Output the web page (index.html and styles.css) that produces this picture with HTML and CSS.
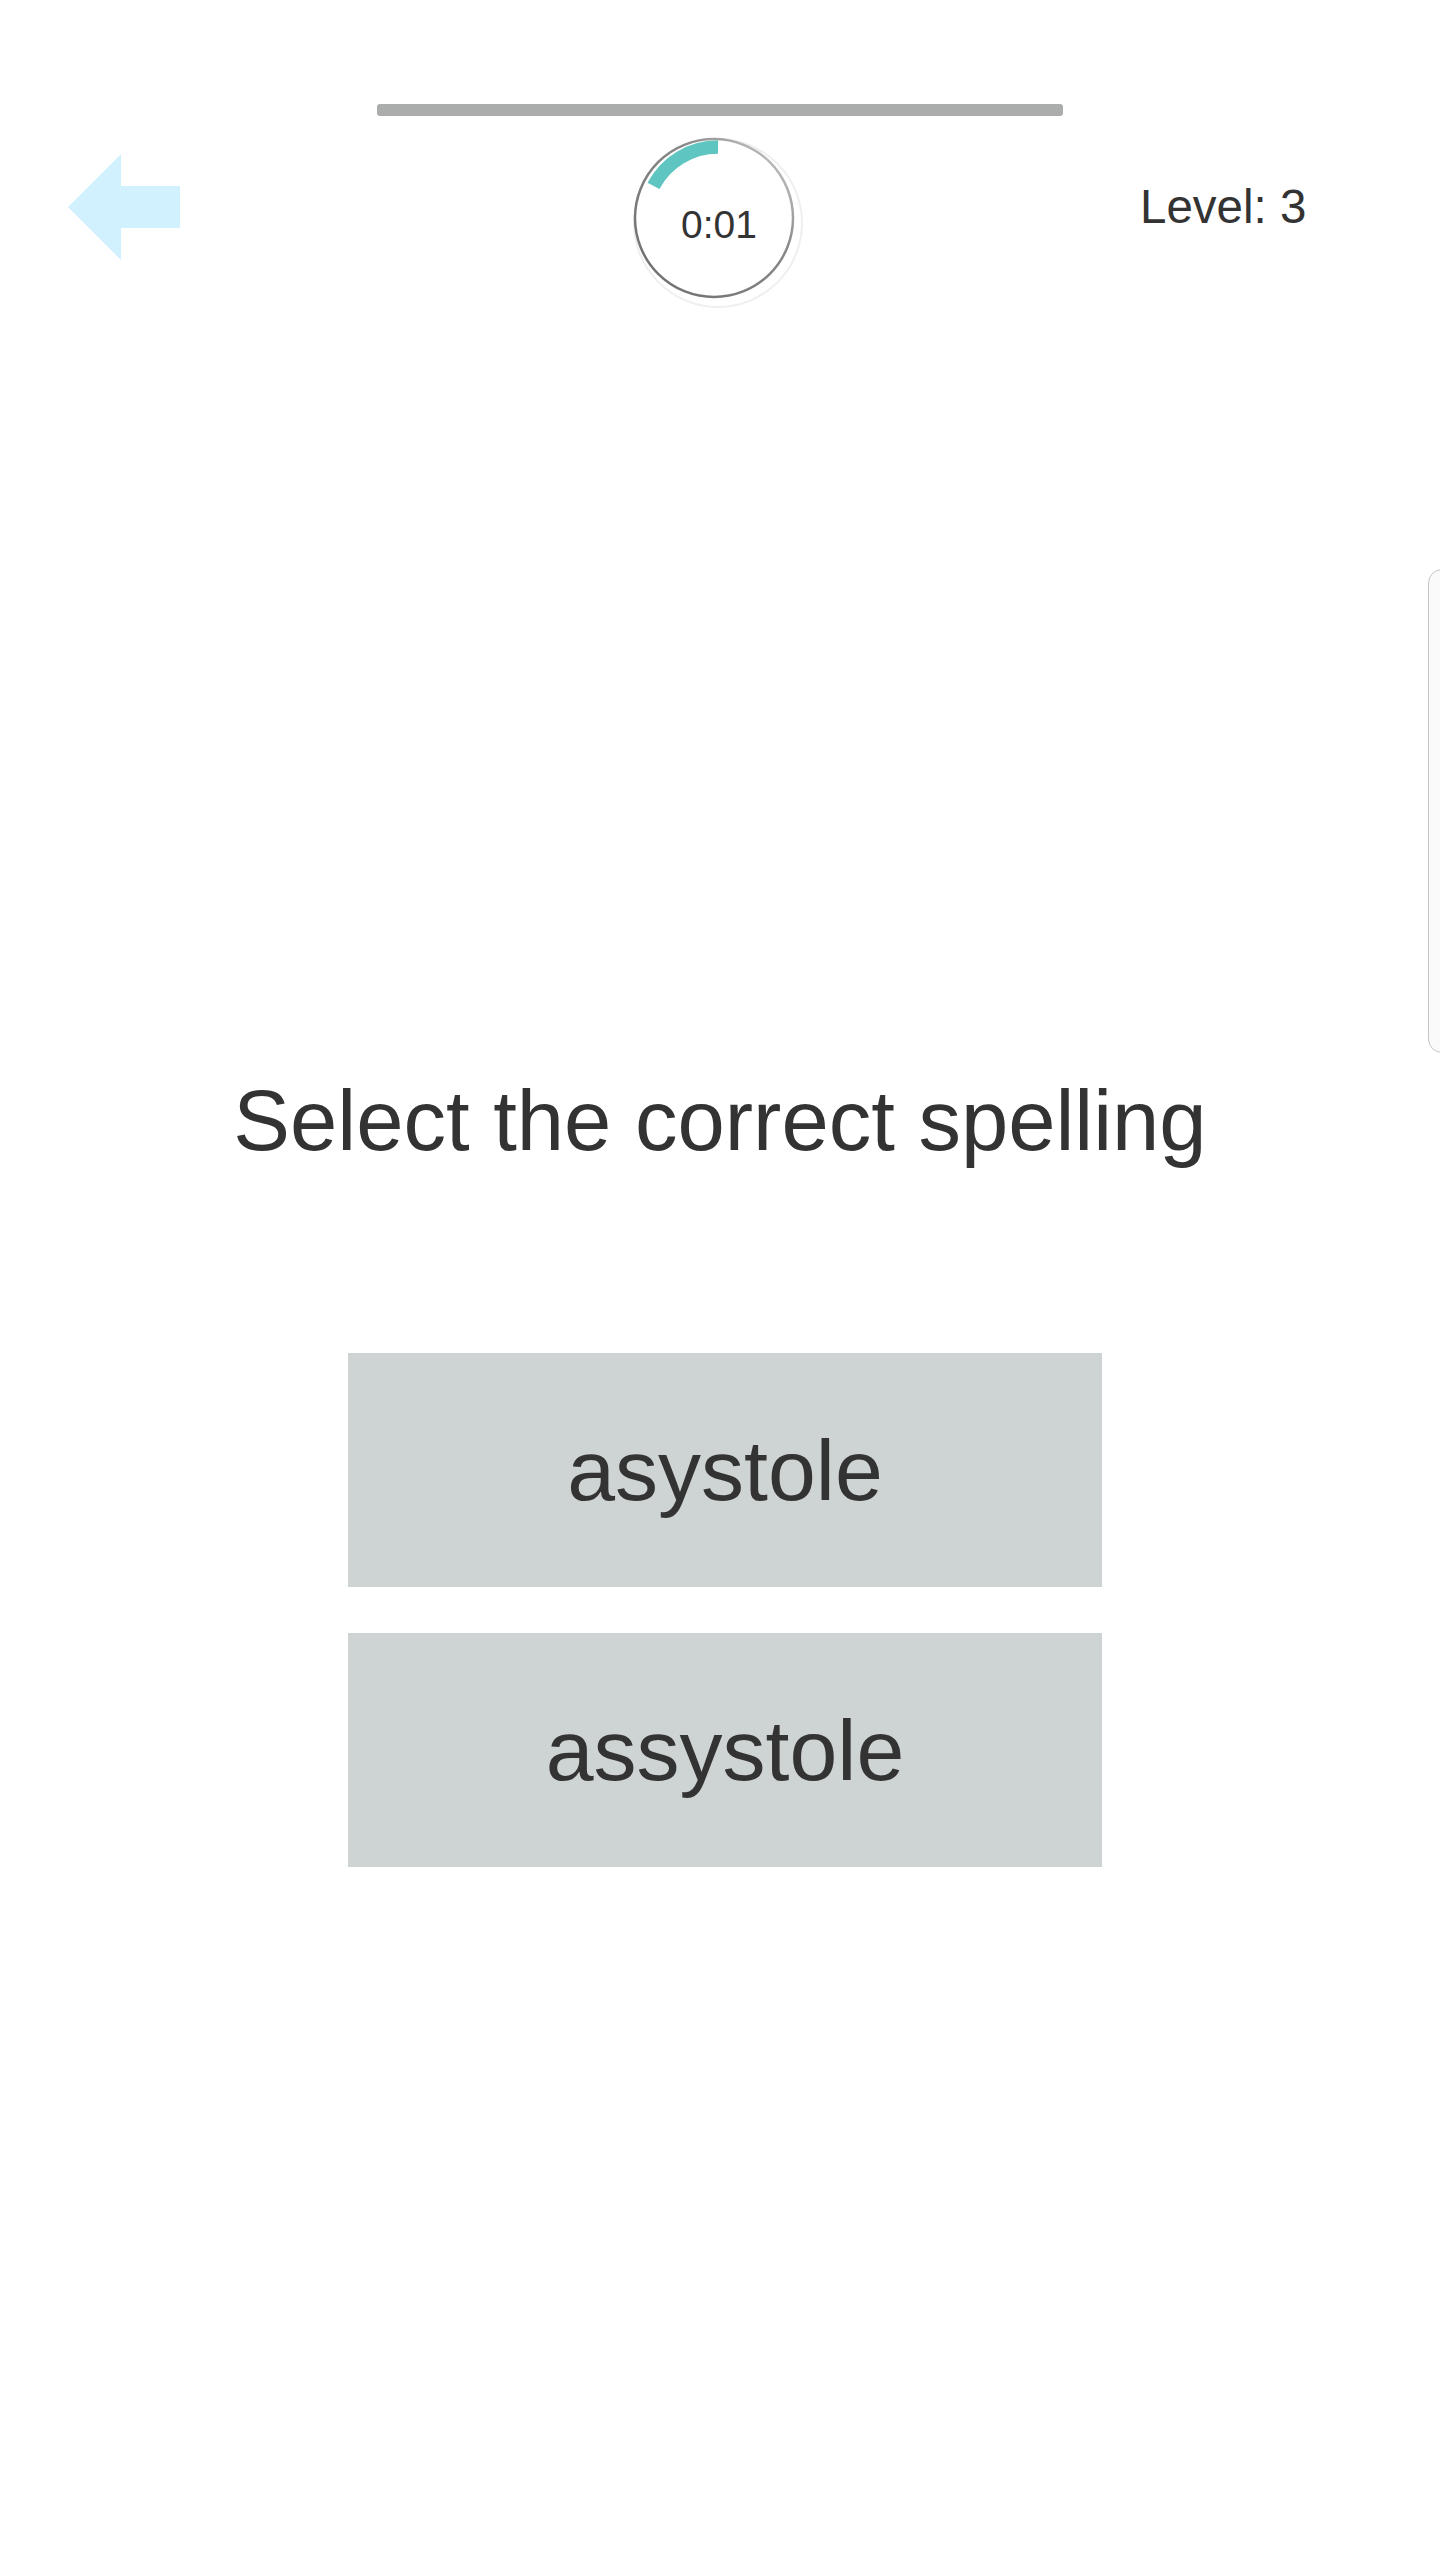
FILE: index.html
```html
<!DOCTYPE html>
<html lang="en">
<head>
<meta charset="utf-8">
<title>Spelling quiz</title>
<link rel="stylesheet" href="styles.css">
</head>
<body>
<div class="page">
  <div class="progress"><div class="progress-fill"></div></div>
  <header class="header">
    <div class="back">
      <svg class="back-icon" width="112" height="106" viewBox="0 0 112 106">
        <polygon points="0,53 53,0 53,32 112,32 112,74 53,74 53,106" fill="#d2f1fe"/>
      </svg>
    </div>
    <div class="timer">
      <svg width="180" height="180" viewBox="0 0 180 180">
        <defs>
          <linearGradient id="ringGrad" x1="1" y1="0" x2="0" y2="1">
            <stop offset="0" stop-color="#d6d6d6"/>
            <stop offset="0.35" stop-color="#8a8a8a"/>
            <stop offset="1" stop-color="#6c6c6c"/>
          </linearGradient>
        </defs>
        <circle cx="88" cy="93" r="84" fill="none" stroke="#efefef" stroke-width="2"/>
        <circle cx="84" cy="88" r="79" fill="#fff" stroke="url(#ringGrad)" stroke-width="2.5"/>
        <path d="M 88 17 A 73 73 0 0 0 23.5 55.8" fill="none" stroke="#5fc5c1" stroke-width="13.5"/>
        <text class="timer-text" x="89" y="108" text-anchor="middle">0:01</text>
      </svg>
    </div>
    <div class="level">Level: 3</div>
  </header>
  <div class="media"></div>
  <h1 class="prompt">Select the correct spelling</h1>
  <div class="options">
    <button class="option">asystole</button>
    <button class="option">assystole</button>
  </div>
  <div class="peek"></div>
</div>
</body>
</html>
```
FILE: styles.css
```css
html, body {
  margin: 0;
  padding: 0;
  background: #ffffff;
}

body {
  font-family: "Liberation Sans", Arial, sans-serif;
  color: #333333;
  overflow: hidden;
}

.page {
  position: relative;
  width: 1440px;
  height: 2560px;
  overflow: hidden;
}

.progress {
  width: 686px;
  height: 12px;
  margin: 104px auto 0;
  border-radius: 3px;
  background: #aaadac;
}

.progress-fill {
  width: 0;
  height: 100%;
}

.header {
  display: grid;
  grid-template-columns: 1fr 180px 1fr;
  align-items: start;
  margin-top: 14px;
  height: 180px;
}

.back {
  padding-left: 68px;
  padding-top: 24px;
}

.back-icon {
  display: block;
}

.timer svg {
  display: block;
}

.timer-text {
  font-family: "Liberation Sans", Arial, sans-serif;
  font-size: 39px;
  fill: #333333;
}

.level {
  padding-left: 330px;
  padding-top: 53px;
  font-size: 47.5px;
  line-height: 1;
  color: #333333;
  white-space: nowrap;
}

.media {
  height: 768px;
}

.prompt {
  margin: 0;
  font-size: 85px;
  line-height: 1;
  font-weight: normal;
  text-align: center;
  color: #333333;
}

.options {
  display: flex;
  flex-direction: column;
  gap: 46px;
  width: 754px;
  margin: 190px 0 0 348px;
}

.option {
  display: flex;
  align-items: center;
  justify-content: center;
  height: 234px;
  border: none;
  padding: 0;
  background: #ced3d3;
  font-family: "Liberation Sans", Arial, sans-serif;
  font-size: 86px;
  line-height: 1;
  color: #333333;
}

.peek {
  position: absolute;
  top: 569px;
  left: 1428px;
  width: 60px;
  height: 484px;
  box-sizing: border-box;
  border: 1.5px solid #c4c4c4;
  border-radius: 14px;
  background: #fafafa;
}
```
